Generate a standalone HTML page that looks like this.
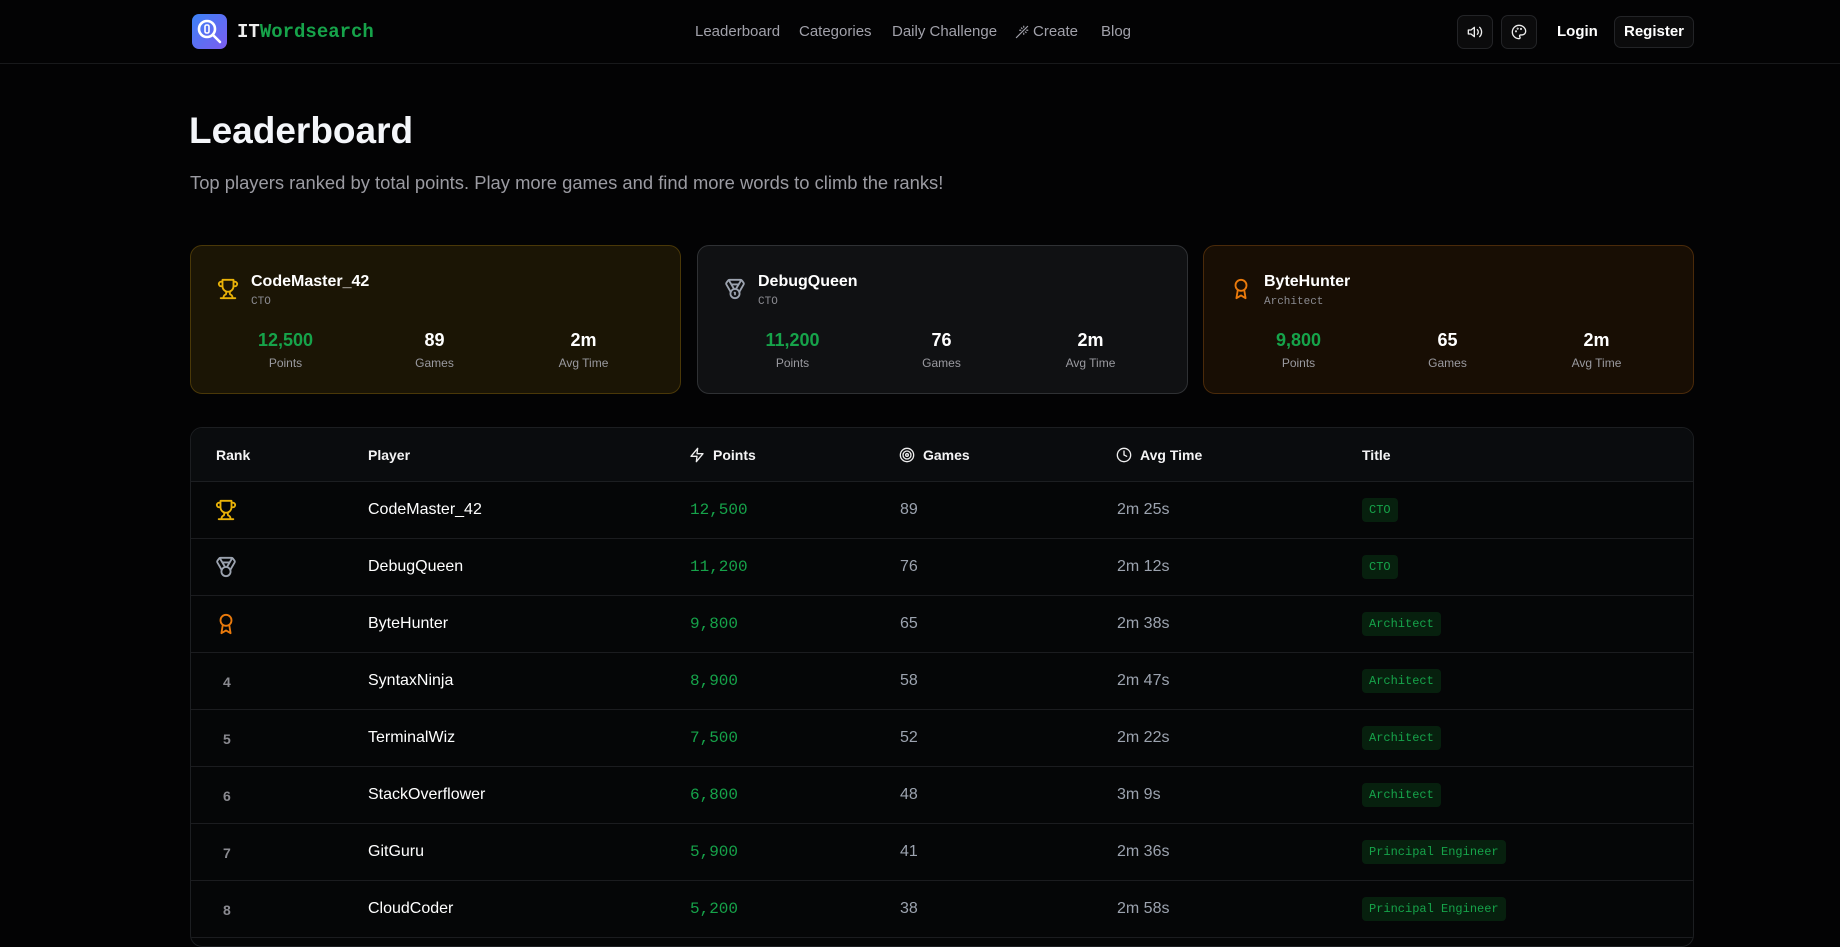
<!DOCTYPE html>
<html><head><meta charset="utf-8">
<style>
*{box-sizing:border-box;margin:0;padding:0}
body{width:1840px;height:915px;overflow:hidden;background:#030304;font-family:"Liberation Sans",sans-serif;color:#f4f4f5;position:relative}
.hdr{position:absolute;left:0;top:0;width:1840px;height:64px;border-bottom:1px solid #18191b}
.abs{position:absolute}
.nav a{position:absolute;top:23px;font-size:15px;color:#a1a1aa;text-decoration:none}
.ibtn{position:absolute;top:15px;width:36px;height:34px;border:1px solid #232427;border-radius:7px;background:#0b0b0c;display:flex;align-items:center;justify-content:center}
.mono{font-family:"Liberation Mono",monospace}
.card{position:absolute;top:245px;width:491px;height:149px;border-radius:12px;border:1px solid}
.card .ic{position:absolute;left:26px;top:32px}
.card .nm{position:absolute;left:60px;top:27px;font-size:16px;font-weight:bold;color:#fff}
.card .sub{position:absolute;left:60px;top:50px;font-size:11px;color:#8a8a90}
.stat{position:absolute;top:84px;width:149px;text-align:center}
.stat b{display:block;font-size:18px;color:#fff}
.stat span{display:block;font-size:12px;color:#9a9aa0;margin-top:5px}
.tbl{position:absolute;left:190px;top:427px;width:1504px;height:520px;border:1px solid #1c1e21;border-radius:12px;background:#050607;overflow:hidden}
.th{position:absolute;left:0;top:0;width:100%;height:54px;background:#0a0c0e;border-bottom:1px solid #1c1e21}
.th div{position:absolute;top:19px;font-size:14px;font-weight:bold;color:#f4f4f5;display:flex;align-items:center;gap:8px}
.row{position:absolute;left:0;width:100%;height:57px;border-bottom:1px solid #1b1c1f}
.row div{position:absolute;top:19px;font-size:16px}
.rk{left:32px;color:#8a8a90;font-weight:bold;font-size:14px!important;top:21px!important}
.pl{left:177px;color:#fff}
.pt{left:499px;color:#16a34a;font-family:"Liberation Mono",monospace;font-size:16px}
.gm{left:709px;color:#9ca3af}
.tm{left:926px;color:#9ca3af}
.bd{left:1171px;top:16px!important;height:24px;padding:0 7px;line-height:24px;font-size:12px!important;font-family:"Liberation Mono",monospace;color:#16a34a;background:#07200e;border-radius:4px}
</style></head><body>
<div class="hdr"></div>
<div class="abs" style="left:192px;top:14px;width:35px;height:35px;border-radius:7px;background:linear-gradient(135deg,#3b82f6,#7c5cf0);">
<svg width="35" height="35" viewBox="0 0 35 35" fill="none" stroke="#fff" stroke-width="2.6" stroke-linecap="round"><circle cx="15" cy="15" r="8"/><path d="M21 21l7 7"/><rect x="13" y="11" width="4" height="8" rx="1.5" stroke-width="1.6"/></svg></div>
<div class="abs mono" style="left:237px;top:21px;font-size:19px;font-weight:bold;"><span style="color:#eee">IT</span><span style="color:#16a34a">Wordsearch</span></div>
<div class="nav">
<a style="left:695px">Leaderboard</a><a style="left:799px">Categories</a><a style="left:892px">Daily Challenge</a>
<a style="left:1015px;display:flex;align-items:center;gap:4px"><svg width="14" height="14" viewBox="0 0 24 24" fill="none" stroke="#a1a1aa" stroke-width="2" stroke-linecap="round"><path d="M21.6 2.4l-19.2 19.2M15 4V2M15 16v-2M8 9h2M20 9h2M17.8 11.8L19 13M17.8 6.2L19 5M3 21l9-9M12.2 6.2L11 5"/></svg>Create</a>
<a style="left:1101px">Blog</a></div>
<div class="ibtn" style="left:1457px"><svg width="16" height="16" viewBox="0 0 24 24" fill="none" stroke="#eee" stroke-width="2" stroke-linecap="round" stroke-linejoin="round"><path d="M11 5L6 9H2v6h4l5 4V5z"/><path d="M15.5 8.5a5 5 0 0 1 0 7M19 5a10 10 0 0 1 0 14"/></svg></div>
<div class="ibtn" style="left:1501px"><svg width="16" height="16" viewBox="0 0 24 24" fill="none" stroke="#eee" stroke-width="2" stroke-linecap="round"><path d="M12 2a10 10 0 0 0 0 20c1 0 1.6-.8 1.6-1.7 0-.5-.2-.8-.4-1.1-.3-.3-.4-.7-.4-1.1 0-.9.7-1.7 1.7-1.7h2A5.5 5.5 0 0 0 22 11c0-5-4.5-9-10-9z"/><circle cx="7.5" cy="11" r=".6"/><circle cx="10" cy="7" r=".6"/><circle cx="15" cy="7.5" r=".6"/></svg></div>
<div class="abs" style="left:1557px;top:23px;font-size:15px;font-weight:bold;color:#fff">Login</div>
<div class="abs" style="left:1614px;top:16px;width:80px;height:32px;border:1px solid #232427;border-radius:7px;background:#0b0b0c;font-size:15px;font-weight:bold;color:#fff;text-align:center;line-height:30px">Register</div>

<div class="abs" style="left:189px;top:110px;font-size:37px;font-weight:bold;color:#f4f6fa">Leaderboard</div>
<div class="abs" style="left:190px;top:172px;font-size:18.4px;color:#9b9ba2">Top players ranked by total points. Play more games and find more words to climb the ranks!</div>

<div class="card" style="left:190px;background:#1b1505;border-color:#4a3808">
<svg class="ic" width="22" height="22" viewBox="0 0 24 24" fill="none" stroke="#eab308" stroke-width="2" stroke-linecap="round" stroke-linejoin="round"><path d="M6 9H4.5a2.5 2.5 0 0 1 0-5H6M18 9h1.5a2.5 2.5 0 0 0 0-5H18M4 22h16M10 14.66V17c0 .55-.47.98-.97 1.21C7.85 18.75 7 20.24 7 22M14 14.66V17c0 .55.47.98.97 1.21C16.15 18.75 17 20.24 17 22M18 2H6v7a6 6 0 0 0 12 0V2z"/></svg>
<div class="nm">CodeMaster_42</div><div class="sub mono">CTO</div>
<div class="stat" style="left:20px"><b style="color:#16a34a">12,500</b><span>Points</span></div>
<div class="stat" style="left:169px"><b>89</b><span>Games</span></div>
<div class="stat" style="left:318px"><b>2m</b><span>Avg Time</span></div></div>

<div class="card" style="left:697px;background:#101113;border-color:#2f3134">
<svg class="ic" width="22" height="22" viewBox="0 0 24 24" fill="none" stroke="#9ca3af" stroke-width="2" stroke-linecap="round" stroke-linejoin="round"><path d="M7.21 15L2.66 7.14a2 2 0 0 1 .13-2.2L4.4 2.8A2 2 0 0 1 6 2h12a2 2 0 0 1 1.6.8l1.6 2.14a2 2 0 0 1 .14 2.2L16.79 15M11 12L5.12 2.2M13 12l5.88-9.8M8 7h8"/><circle cx="12" cy="17" r="5"/><path d="M12 18v-2h-.5"/></svg>
<div class="nm">DebugQueen</div><div class="sub mono">CTO</div>
<div class="stat" style="left:20px"><b style="color:#16a34a">11,200</b><span>Points</span></div>
<div class="stat" style="left:169px"><b>76</b><span>Games</span></div>
<div class="stat" style="left:318px"><b>2m</b><span>Avg Time</span></div></div>

<div class="card" style="left:1203px;background:#180e04;border-color:#4a2a0a">
<svg class="ic" width="22" height="22" viewBox="0 0 24 24" fill="none" stroke="#ea7a0c" stroke-width="2" stroke-linecap="round" stroke-linejoin="round"><circle cx="12" cy="8" r="6"/><path d="M15.48 12.89L17 22l-5-3-5 3 1.52-9.11"/></svg>
<div class="nm">ByteHunter</div><div class="sub mono">Architect</div>
<div class="stat" style="left:20px"><b style="color:#16a34a">9,800</b><span>Points</span></div>
<div class="stat" style="left:169px"><b>65</b><span>Games</span></div>
<div class="stat" style="left:318px"><b>2m</b><span>Avg Time</span></div></div>

<div class="tbl">
<div class="th">
<div style="left:25px">Rank</div><div style="left:177px">Player</div>
<div style="left:498px"><svg width="16" height="16" viewBox="0 0 24 24" fill="none" stroke="#eee" stroke-width="2" stroke-linejoin="round"><path d="M13 2L3 14h9l-1 8 10-12h-9l1-8z"/></svg>Points</div>
<div style="left:708px"><svg width="16" height="16" viewBox="0 0 24 24" fill="none" stroke="#eee" stroke-width="2"><circle cx="12" cy="12" r="10"/><circle cx="12" cy="12" r="6"/><circle cx="12" cy="12" r="2"/></svg>Games</div>
<div style="left:925px"><svg width="16" height="16" viewBox="0 0 24 24" fill="none" stroke="#eee" stroke-width="2" stroke-linecap="round"><circle cx="12" cy="12" r="10"/><path d="M12 6v6l4 2"/></svg>Avg Time</div>
<div style="left:1171px">Title</div></div>

<div class="row" style="top:54px"><div class="rk"><svg width="22" height="22" viewBox="0 0 24 24" fill="none" stroke="#eab308" stroke-width="2" stroke-linecap="round" stroke-linejoin="round" style="margin:-4px 0 0 -8px"><path d="M6 9H4.5a2.5 2.5 0 0 1 0-5H6M18 9h1.5a2.5 2.5 0 0 0 0-5H18M4 22h16M10 14.66V17c0 .55-.47.98-.97 1.21C7.85 18.75 7 20.24 7 22M14 14.66V17c0 .55.47.98.97 1.21C16.15 18.75 17 20.24 17 22M18 2H6v7a6 6 0 0 0 12 0V2z"/></svg></div><div class="pl">CodeMaster_42</div><div class="pt">12,500</div><div class="gm">89</div><div class="tm">2m 25s</div><div class="bd">CTO</div></div>
<div class="row" style="top:111px"><div class="rk"><svg width="22" height="22" viewBox="0 0 24 24" fill="none" stroke="#9ca3af" stroke-width="2" stroke-linecap="round" stroke-linejoin="round" style="margin:-4px 0 0 -8px"><path d="M7.21 15L2.66 7.14a2 2 0 0 1 .13-2.2L4.4 2.8A2 2 0 0 1 6 2h12a2 2 0 0 1 1.6.8l1.6 2.14a2 2 0 0 1 .14 2.2L16.79 15M11 12L5.12 2.2M13 12l5.88-9.8M8 7h8"/><circle cx="12" cy="17" r="5"/></svg></div><div class="pl">DebugQueen</div><div class="pt">11,200</div><div class="gm">76</div><div class="tm">2m 12s</div><div class="bd">CTO</div></div>
<div class="row" style="top:168px"><div class="rk"><svg width="22" height="22" viewBox="0 0 24 24" fill="none" stroke="#ea7a0c" stroke-width="2" stroke-linecap="round" stroke-linejoin="round" style="margin:-4px 0 0 -8px"><circle cx="12" cy="8" r="6"/><path d="M15.48 12.89L17 22l-5-3-5 3 1.52-9.11"/></svg></div><div class="pl">ByteHunter</div><div class="pt">9,800</div><div class="gm">65</div><div class="tm">2m 38s</div><div class="bd">Architect</div></div>
<div class="row" style="top:225px"><div class="rk">4</div><div class="pl">SyntaxNinja</div><div class="pt">8,900</div><div class="gm">58</div><div class="tm">2m 47s</div><div class="bd">Architect</div></div>
<div class="row" style="top:282px"><div class="rk">5</div><div class="pl">TerminalWiz</div><div class="pt">7,500</div><div class="gm">52</div><div class="tm">2m 22s</div><div class="bd">Architect</div></div>
<div class="row" style="top:339px"><div class="rk">6</div><div class="pl">StackOverflower</div><div class="pt">6,800</div><div class="gm">48</div><div class="tm">3m 9s</div><div class="bd">Architect</div></div>
<div class="row" style="top:396px"><div class="rk">7</div><div class="pl">GitGuru</div><div class="pt">5,900</div><div class="gm">41</div><div class="tm">2m 36s</div><div class="bd">Principal Engineer</div></div>
<div class="row" style="top:453px"><div class="rk">8</div><div class="pl">CloudCoder</div><div class="pt">5,200</div><div class="gm">38</div><div class="tm">2m 58s</div><div class="bd">Principal Engineer</div></div>
</div>
</body></html>
